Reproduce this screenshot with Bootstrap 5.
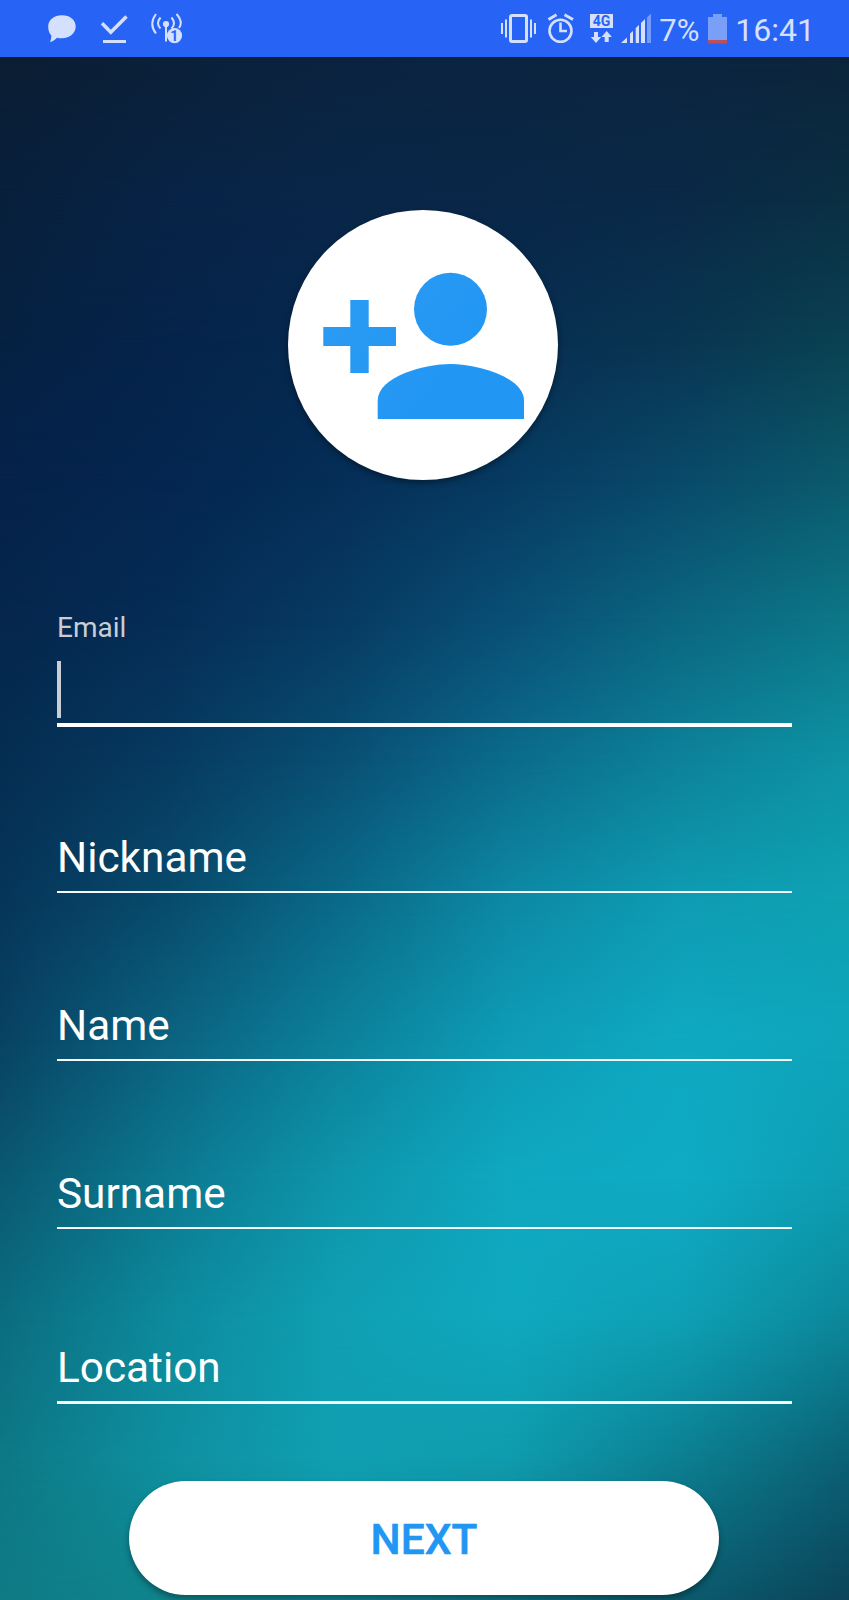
<!DOCTYPE html>
<html lang="en">
<head>
<meta charset="utf-8">
<meta name="viewport" content="width=device-width, initial-scale=1">
<title>Sign up</title>
<link href="https://cdn.jsdelivr.net/npm/bootstrap@5.3.0/dist/css/bootstrap.min.css" rel="stylesheet">
<style>
  body { font-family: Roboto, sans-serif; background: #0b2240; }
  .screen { height: 1600px; }
  .backdrop { top: 57px; height: 1543px; z-index: 0; }
  .strip-top, .strip-next { background: linear-gradient(to right, var(--stops)); }
  .strip-next { -webkit-mask-image: linear-gradient(transparent, #000); mask-image: linear-gradient(transparent, #000); }
  .status-bar { height: 57px; background: #2764f6; color: #d5e0ff; z-index: 1; padding-left: 46px; padding-right: 34px; }
  .status-bar svg { display: block; height: 57px; flex: none; }
  .status-text { font-size: 31px; line-height: 57px; padding-top: 2px; white-space: nowrap; }
  .signup { z-index: 1; padding: 153px 57px 0; }
  .avatar { width: 270px; height: 270px; margin-left: 231px; background: #fff; box-shadow: 0 3px 6px rgba(0,0,0,.4); }
  .avatar svg { display: block; width: 270px; height: 270px; }
  .field { border-bottom: 2px solid #f4f9fb; height: 168px; padding-bottom: 12px; color: #fff; font-size: 42.3px; line-height: 42px; width: 735px; }
  .field-active { border-bottom: 4px solid #fff; height: 247px; padding-bottom: 5px; }
  .field-last { border-bottom-width: 3px; height: 175px; }
  .float-label { font-size: 28px; line-height: 28px; color: #c8ced4; margin-bottom: 19px; }
  .caret { width: 4px; height: 57px; background: #c8ced6; }
  .btn-next { --bs-btn-color: #2196f3; --bs-btn-bg: #fff; --bs-btn-hover-bg: #fff; --bs-btn-hover-color: #2196f3; width: 590px; height: 114px; margin: 77px 0 0 72px; font-size: 42.5px; font-weight: 500; line-height: 42px; border: 0; padding: 4px 0 0; -webkit-text-stroke: .5px #2196f3; box-shadow: 0 4px 6px rgba(0,0,0,.35); }
</style>
</head>
<body>
<div class="screen position-relative overflow-hidden">
  <div class="backdrop position-absolute start-0 w-100 d-flex flex-column" id="backdrop"></div>

  <header class="status-bar position-relative d-flex justify-content-between">
    <div class="d-flex">
      <svg width="54" viewBox="46 0 54 57" fill="#d5e0ff"><path d="M62 15.300C70 15.300 75.700 20 75.700 26.500S70 38.300 62 38.300C60 38.300 58.500 38 57 37.700C55 40 52.500 41.300 50 42C51 40 51.500 37 51.200 35.300C49 33 48.200 30 48.200 26.500C48.200 20 54 15.300 62 15.300Z"/></svg>
      <svg width="48" viewBox="100 0 48 57" fill="none" stroke="#d5e0ff"><path d="M102 23.200L110.800 32.300L126.500 16.500" stroke-width="3.500"/><path d="M103 41.500H126" stroke-width="3"/></svg>
      <svg width="36" viewBox="148 0 36 57" fill="none" stroke="#d5e0ff" stroke-width="2"><circle cx="166" cy="24" r="3.100" fill="#d5e0ff" stroke="none"/><path d="M166 24V41.500M160.500 17.500Q155.500 23.500 160.500 28.500M171.500 17.500Q176.500 23.500 171.500 28.500M156 14Q148.500 24 156 33.500M176.500 14Q183.500 22 179 28"/><circle cx="174.500" cy="35.600" r="7.600" fill="#d5e0ff" stroke="none"/><text x="174.300" y="40.800" text-anchor="middle" font-family="Roboto, sans-serif" font-size="14" font-weight="700" fill="#2764f6" stroke="none">1</text></svg>
    </div>
    <div class="d-flex">
      <svg width="43" viewBox="500 0 43 57" fill="none" stroke="#d5e0ff"><rect x="510.500" y="15.500" width="16" height="26" rx="1.500" stroke-width="3"/><path d="M502 23V34M506 19.500V37.500M531 19.500V37.500M535 23V34" stroke-width="2"/></svg>
      <svg width="43" viewBox="543 0 43 57" fill="none" stroke="#d5e0ff"><circle cx="560.500" cy="30.800" r="11" stroke-width="2.600"/><path d="M560.500 22.500V31H567" stroke-width="2.600"/><path d="M548.500 19.500L556.500 14.800M564.500 14.800L573 19.500" stroke-width="3"/></svg>
      <svg width="33" viewBox="586 0 33 57" fill="#d5e0ff"><rect x="590" y="14" width="23" height="14"/><text x="601.500" y="26" text-anchor="middle" font-family="Roboto, sans-serif" font-size="14" font-weight="700" fill="#2764f6">4G</text><path d="M594 32H598V37H601.200L596 43L590.800 37H594ZM604.700 42V37H601.500L606.700 31L611.900 37H608.700V42Z"/></svg>
      <svg width="36" viewBox="619 0 36 57" fill="#d5e0ff"><path d="M621 43L627 37.500V43ZM630 43V33.500L633 31V43ZM635.700 43V28L639 25V43ZM641 43V23L645 19V43Z"/><path d="M647 43V17.500L651 13.500V43Z" opacity=".45"/></svg>
      <div class="status-text" style="width:49px"><span class="ps-1">7%</span></div>
      <svg width="31" viewBox="704 0 31 57"><path d="M708 17H713V14H722V17H727V40H708Z" fill="#7a9ff9"/><rect x="708" y="40" width="19" height="3.600" fill="#b8505f"/></svg>
      <div class="status-text" style="font-size:32px">16:41</div>
    </div>
  </header>

  <main class="signup position-relative">
    <div class="avatar rounded-circle">
      <svg viewBox="288 210 270 270"><defs><linearGradient id="tint" x1="323" y1="272" x2="523" y2="420" gradientUnits="userSpaceOnUse"><stop offset="0" stop-color="#2c9cf3"/><stop offset=".7" stop-color="#2196f3"/></linearGradient></defs><g fill="url(#tint)"><circle cx="450.500" cy="309.300" r="36.500"/><path d="M350.300 300H368.700V327H396V346H368.700V373H350.300V346H323.300V327H350.300Z"/><path d="M450.500 364C426 364 377.700 376 377.700 400.500V419H524V400.500C524 376 475 364 450.500 364Z"/></g></svg>
    </div>
    <form>
      <div class="field field-active d-flex flex-column justify-content-end"><label class="float-label">Email</label><span class="caret"></span></div>
      <div class="field field-plain d-flex align-items-end" style="height:166px"><label>Nickname</label></div>
      <div class="field d-flex align-items-end"><label>Name</label></div>
      <div class="field d-flex align-items-end"><label>Surname</label></div>
      <div class="field field-last d-flex align-items-end"><label>Location</label></div>
      <button type="button" class="btn btn-next rounded-pill">NEXT</button>
    </form>
  </main>
</div>
<script src="https://cdn.jsdelivr.net/npm/bootstrap@5.3.0/dist/js/bootstrap.bundle.min.js"></script>
<script>
  // Colour mesh of the backdrop: each row runs left to right, and neighbouring rows blend.
  const mesh = [
    '#0b1e33,#0b2139,#0b2340,#0b2441,#0c2440,#0c243a',
    '#08203c,#082346,#092648,#092747,#0a2947,#0a2f42',
    '#062142,#05244a,#06284e,#072d50,#093551,#0a4152',
    '#05224a,#042650,#052e57,#073a61,#09496a,#0b5a6b',
    '#05264d,#052d56,#073a62,#094f75,#0b6680,#0c7788',
    '#052d52,#073a60,#094f73,#0b6b8b,#0d8299,#0e93a4',
    '#06355a,#084b6c,#0a6a88,#0d89a5,#0e9cb3,#0ea2b3',
    '#084263,#0b6380,#0c819b,#0e9cb6,#0fa9c1,#0ea5bb',
    '#0a5972,#0c7990,#0e96ac,#0fa8c0,#0fabc4,#0d9eb3',
    '#0b6d80,#0d8b9d,#10a0b4,#0fa8be,#0ea0b5,#0c8799',
    '#0d7886,#0f90a0,#109fb2,#0f9bad,#0c7f91,#0b6074',
    '#0f7b84,#0f848c,#0f8694,#0d7687,#0b5b6e,#0b4459'
  ];
  document.getElementById('backdrop').innerHTML = mesh.slice(1).map((next, i) =>
    `<div class="strip-top flex-fill" style="--stops:${mesh[i]}"><div class="strip-next h-100" style="--stops:${next}"></div></div>`).join('');
</script>
</body>
</html>
